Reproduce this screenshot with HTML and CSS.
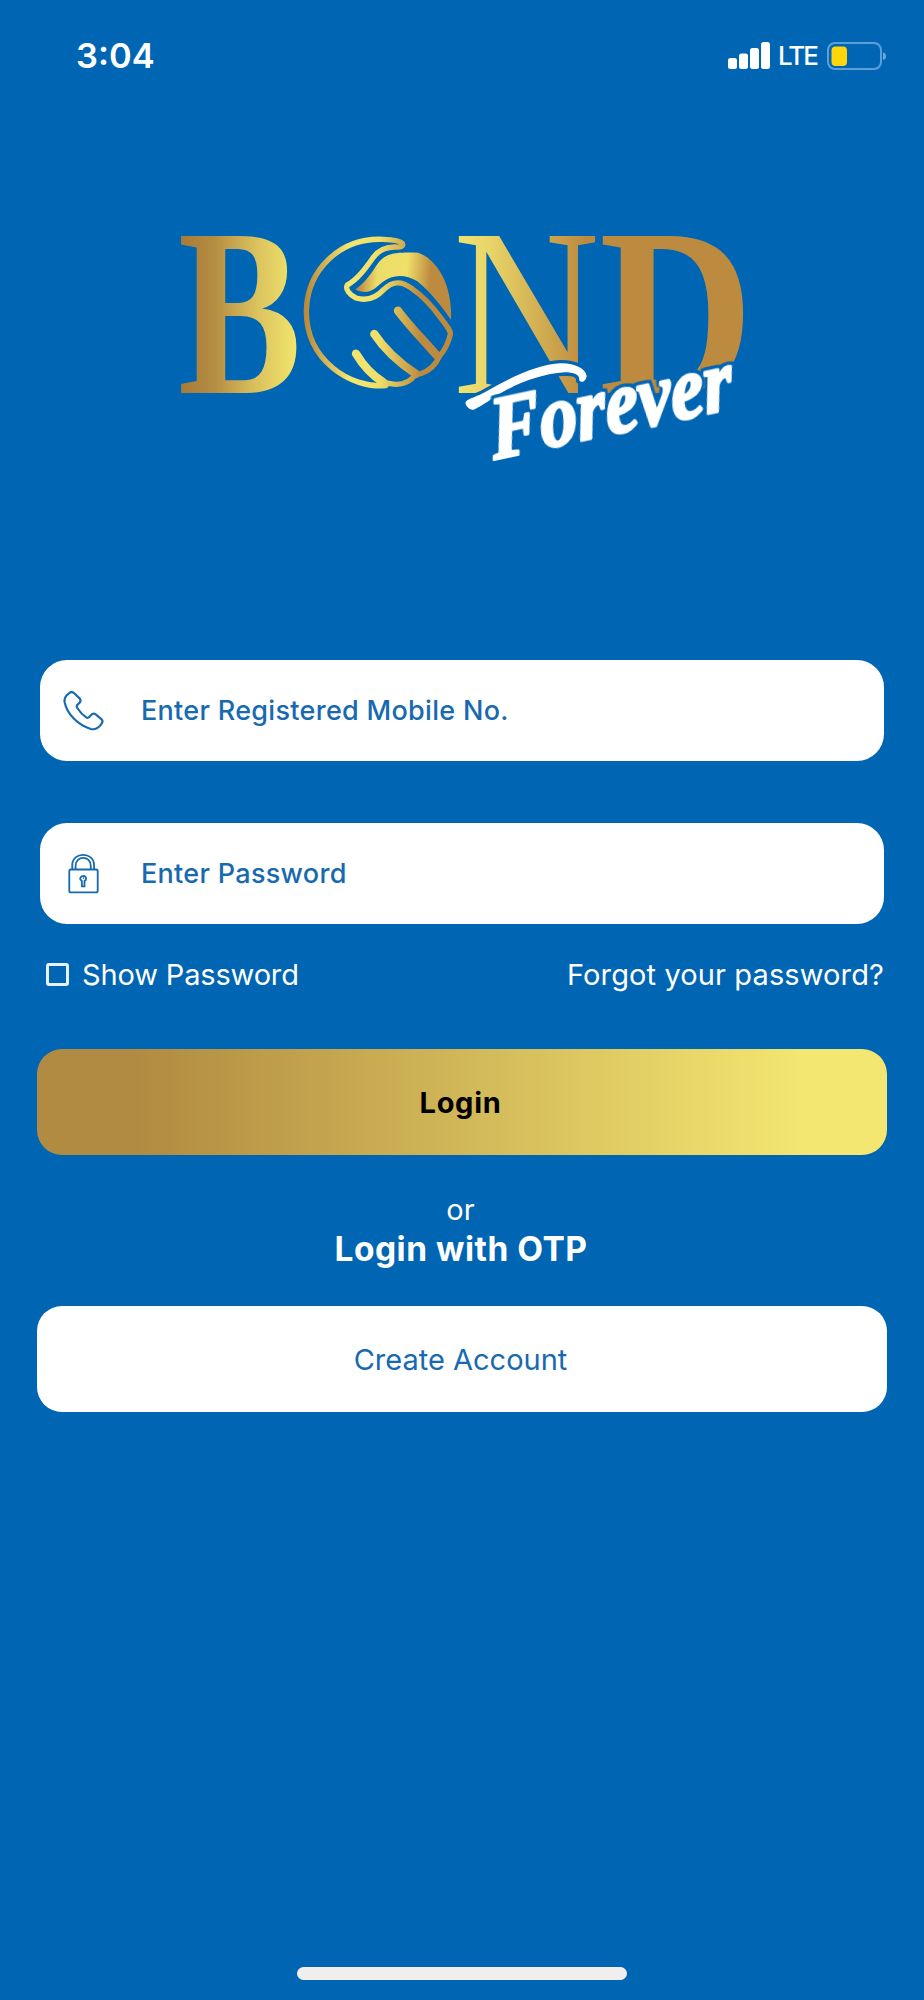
FILE: index.html
```html
<!DOCTYPE html>
<html lang="en">
<head>
    <meta charset="UTF-8">
    <meta name="viewport" content="width=device-width, initial-scale=1.0">
    <title>Bond Forever - Login</title>
    <link rel="stylesheet" href="styles.css">
</head>
<body>
    <div class="status-bar">
        <span class="time">3:04</span>
        <div class="status-icons">
            <svg class="signal" viewBox="0 0 42 27">
                <rect x="0" y="16" width="9" height="11" rx="2.5"/>
                <rect x="11" y="11.5" width="9" height="15.5" rx="2.5"/>
                <rect x="22" y="6" width="9" height="21" rx="2.5"/>
                <rect x="33" y="0" width="9" height="27" rx="2.5"/>
            </svg>
            <span class="network">LTE</span>
            <svg class="battery" viewBox="0 0 60 28">
                <rect class="battery-case" x="1" y="1" width="53" height="26" rx="7"/>
                <rect class="battery-level" x="4.5" y="4.5" width="15.5" height="19.5" rx="4"/>
                <path class="battery-tip" d="M56 10.5 Q59 11 59 14.3 Q59 17.5 56 18 Z"/>
            </svg>
        </div>
    </div>

    <div class="logo">
        <svg viewBox="170 220 590 250" width="590" height="250">
            <defs>
                <linearGradient id="goldB">
                    <stop offset="0" stop-color="#a67a37"/>
                    <stop offset="0.3" stop-color="#b58d43"/>
                    <stop offset="0.62" stop-color="#d9c05c"/>
                    <stop offset="0.95" stop-color="#f0e46c"/>
                </linearGradient>
                <linearGradient id="goldN">
                    <stop offset="0" stop-color="#f0e572"/>
                    <stop offset="0.25" stop-color="#e8d568"/>
                    <stop offset="0.9" stop-color="#bd8b3f"/>
                </linearGradient>
                <linearGradient id="goldRing" gradientUnits="userSpaceOnUse" x1="400" y1="0" x2="850" y2="0">
                    <stop offset="0" stop-color="#b58539"/>
                    <stop offset="0.3" stop-color="#f2e671"/>
                    <stop offset="0.5" stop-color="#f0e06a"/>
                    <stop offset="0.78" stop-color="#bd8b3f"/>
                    <stop offset="1" stop-color="#bd8b3f"/>
                </linearGradient>
                <linearGradient id="goldThumb" gradientUnits="userSpaceOnUse" x1="560" y1="210" x2="850" y2="230">
                    <stop offset="0" stop-color="#b8863c"/>
                    <stop offset="0.2" stop-color="#ecdc69"/>
                    <stop offset="0.5" stop-color="#f0e06a"/>
                    <stop offset="0.75" stop-color="#bd8b3f"/>
                </linearGradient>
            </defs>
            <text class="logo-letter" fill="url(#goldB)" transform="translate(178 393) scale(0.775 1)">B</text>
            <text class="logo-letter thin" fill="url(#goldN)" transform="translate(453 393) scale(0.85 1)">N</text>
            <text class="logo-letter" fill="#bd8b3f" transform="translate(599 393) scale(0.895 1)">D</text>

            <!-- handshake -->
            <g transform="translate(170 220) scale(0.33333)" stroke="url(#goldRing)" fill="none" stroke-linecap="round" stroke-linejoin="round">
                <path stroke-width="16" d="M648 497 C540 506 408 420 409 272 C412 150 510 52 640 58 C665 59 690 62 697 70 C702 80 690 82 678 81 C650 80 628 88 610 112 C588 143 562 180 532 195 C524 207 540 226 558 234 C590 244 618 234 642 208 C668 183 692 182 722 203 C754 225 786 258 811 292 C828 315 843 332 841 343 C835 372 823 392 808 409"/>
                <path stroke-width="25" d="M684 272 C720 320 762 362 799 405"/>
                <path stroke-width="25" d="M613 342 C644 389 690 430 738 462"/>
                <path stroke-width="25" d="M558 401 C580 438 606 466 640 487"/>
                <path stroke-width="16" d="M808 409 C799 430 780 452 752 461 L738 462 C722 484 696 498 661 491 L640 487"/>
                <path stroke="none" fill="url(#goldThumb)" d="M556 208 C588 188 606 155 624 130 C648 97 680 97 745 98 C805 120 848 200 843 299 C815 260 784 219 742 184 C706 162 668 162 638 186 C618 203 606 214 588 216 Q568 216 556 208 Z"/>
            </g>

            <g transform="translate(440 220) scale(0.33333)">
                <path class="swash" d="M76 548 C82 535 112 532 145 511 C220 467 300 433 361 430 C405 429 437 446 440 468 C438 485 424 489 418 482 C420 464 403 457 374 457 C306 461 230 489 172 526 C147 543 116 563 101 569 C88 569 79 561 76 548 Z"/>
            </g>
            <text class="logo-script" transform="translate(494 459) rotate(-12) skewX(-5) scale(0.845 1)">Forever</text>
        </svg>
    </div>

    <div class="login-form">
        <div class="input-box">
            <svg class="input-icon" viewBox="100 119 124 124">
                <path d="M118 129 Q126 122 134 129 L151 145 Q156 151 149 159 Q139 166 142 172 Q154 191 172 203 Q178 205 184 196 Q190 188 198 192 L216 207 Q223 214 216 222 C207 234 196 240 184 237 C145 224 112 192 105 156 C103 144 108 136 118 129 Z"/>
            </svg>
            <span class="placeholder">Enter Registered Mobile No.</span>
        </div>

        <div class="input-box">
            <svg class="input-icon lock" viewBox="100 126 124 124">
                <rect x="119" y="176" width="86" height="69" rx="5"/>
                <path d="M128 176 V163 C128 121 194 121 194 163 V176 M138 176 V165 C138 133 184 133 184 165 V176"/>
                <path d="M157 211 Q151 207 152 202 Q155 195 161 195 Q169 196 170 203 Q170 208 165 211 V227 H157 Z M160 202 H163"/>
            </svg>
            <span class="placeholder">Enter Password</span>
        </div>

        <div class="options">
            <div class="show-password">
                <span class="checkbox"></span>
                <span class="show-label">Show Password</span>
            </div>
            <span class="forgot">Forgot your password?</span>
        </div>

        <div class="button login-button"><span>Login</span></div>
        <div class="or">or</div>
        <div class="otp">Login with OTP</div>
        <div class="button create-button"><span>Create Account</span></div>
    </div>

    <div class="home-indicator"></div>
</body>
</html>
```
FILE: styles.css
```css
* {
    box-sizing: border-box;
}

body {
    margin: 0;
    height: 2000px;
    display: flex;
    flex-direction: column;
    background-color: #0065b3;
    color: #fff;
    font-family: 'Inter', sans-serif;
}

svg {
    display: block;
    overflow: visible;
}

.status-bar {
    height: 111px;
    padding: 0 37px 0 76px;
    display: flex;
    align-items: center;
    justify-content: space-between;
}

.time {
    font-size: 34.5px;
    font-weight: 600;
}

.status-icons {
    display: flex;
    align-items: center;
}

.signal {
    width: 42px;
    height: 27px;
    fill: #fff;
}

.network {
    width: 41px;
    margin: 0 8px 0 8px;
    font-size: 26px;
    font-weight: 500;
    letter-spacing: -2px;
    white-space: nowrap;
}

.battery {
    width: 60px;
    height: 28px;
}

.battery-case {
    fill: none;
    stroke: #5c9fd6;
    stroke-width: 2;
}

.battery-level {
    fill: #ffd60a;
}

.battery-tip {
    fill: #6ba8da;
}

.logo {
    height: 549px;
    padding: 109px 0 0 170px;
}

.logo-letter {
    font-family: 'Liberation Serif', serif;
    font-size: 239px;
    font-weight: 700;
}

.thin {
    font-weight: 400;
}

.logo-script {
    font-family: 'Liberation Serif', serif;
    font-size: 89px;
    font-style: italic;
    font-weight: 700;
    fill: #fff;
    stroke: #fff;
    stroke-width: 3px;
    stroke-linejoin: round;
    filter: drop-shadow(0 -3px 0 #0065b3) drop-shadow(3px 0 0 #0065b3) drop-shadow(-3px 0 0 #0065b3);
}

.swash {
    fill: #fff;
    stroke: #0065b3;
    stroke-width: 20px;
    paint-order: stroke;
}

.login-form {
    padding: 0 37px;
}

.input-box {
    height: 101px;
    margin: 0 3px 62px;
    padding-left: 23px;
    display: flex;
    align-items: center;
    background-color: #fff;
    border-radius: 27px;
}

.input-icon {
    width: 41px;
    height: 41px;
    margin-right: 37px;
    fill: none;
    stroke: #1769b0;
    stroke-width: 6.5;
    stroke-linejoin: round;
}

.lock {
    stroke-width: 5.5;
}

.placeholder {
    color: #1769b0;
    font-size: 27px;
    font-weight: 500;
    letter-spacing: 0.3px;
}

.options {
    height: 36px;
    margin-top: -30px;
    padding: 0 3px 0 9px;
    display: flex;
    align-items: center;
    justify-content: space-between;
    font-size: 29px;
}

.show-password {
    display: flex;
    align-items: center;
}

.show-label {
    letter-spacing: -0.15px;
}

.forgot {
    letter-spacing: 0.12px;
}

.checkbox {
    width: 23px;
    height: 23px;
    margin-right: 13px;
    border: 3px solid #e6f3ff;
    border-radius: 3px;
}

.button {
    height: 106px;
    display: flex;
    align-items: center;
    justify-content: center;
    padding-right: 3px;
    border-radius: 25px;
    font-size: 29px;
}

.login-button {
    margin-top: 57px;
    background: linear-gradient(to right, #b18b41 12%, #f3e671 90%);
    color: #000;
    font-weight: 700;
    letter-spacing: 0.7px;
}

.or {
    margin-top: 37px;
    padding-right: 3px;
    font-size: 29px;
    line-height: 36px;
    text-align: center;
}

.otp {
    padding-right: 2px;
    font-size: 33.5px;
    font-weight: 700;
    line-height: 42px;
    letter-spacing: 0.5px;
    text-align: center;
}

.create-button {
    margin-top: 36px;
    background-color: #fff;
    color: #1769b0;
}

.home-indicator {
    width: 330px;
    height: 13px;
    margin: auto auto 20px;
    background-color: #f1efed;
    border-radius: 7px;
}
```
